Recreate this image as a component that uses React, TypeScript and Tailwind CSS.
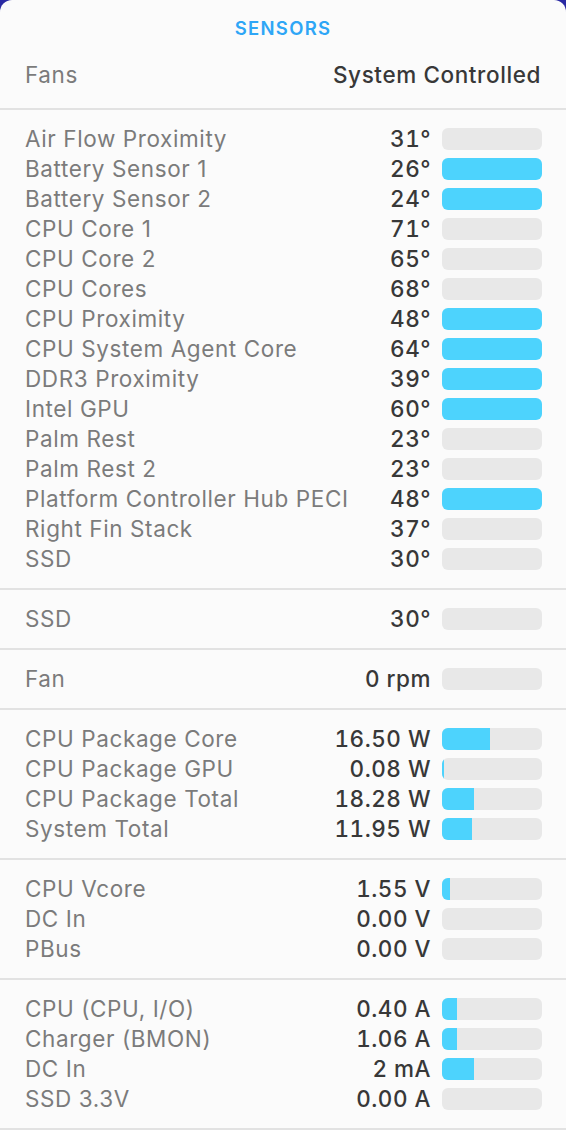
import React from "react";

type Row = {
  label: string;
  value: string;
  fill: number; // px width of the blue part, out of 100
};

const sections: Row[][] = [
  [
    { label: "Air Flow Proximity", value: "31°", fill: 0 },
    { label: "Battery Sensor 1", value: "26°", fill: 100 },
    { label: "Battery Sensor 2", value: "24°", fill: 100 },
    { label: "CPU Core 1", value: "71°", fill: 0 },
    { label: "CPU Core 2", value: "65°", fill: 0 },
    { label: "CPU Cores", value: "68°", fill: 0 },
    { label: "CPU Proximity", value: "48°", fill: 100 },
    { label: "CPU System Agent Core", value: "64°", fill: 100 },
    { label: "DDR3 Proximity", value: "39°", fill: 100 },
    { label: "Intel GPU", value: "60°", fill: 100 },
    { label: "Palm Rest", value: "23°", fill: 0 },
    { label: "Palm Rest 2", value: "23°", fill: 0 },
    { label: "Platform Controller Hub PECI", value: "48°", fill: 100 },
    { label: "Right Fin Stack", value: "37°", fill: 0 },
    { label: "SSD", value: "30°", fill: 0 },
  ],
  [{ label: "SSD", value: "30°", fill: 0 }],
  [{ label: "Fan", value: "0 rpm", fill: 0 }],
  [
    { label: "CPU Package Core", value: "16.50 W", fill: 48 },
    { label: "CPU Package GPU", value: "0.08 W", fill: 2 },
    { label: "CPU Package Total", value: "18.28 W", fill: 32 },
    { label: "System Total", value: "11.95 W", fill: 30 },
  ],
  [
    { label: "CPU Vcore", value: "1.55 V", fill: 8 },
    { label: "DC In", value: "0.00 V", fill: 0 },
    { label: "PBus", value: "0.00 V", fill: 0 },
  ],
  [
    { label: "CPU (CPU, I/O)", value: "0.40 A", fill: 15 },
    { label: "Charger (BMON)", value: "1.06 A", fill: 15 },
    { label: "DC In", value: "2 mA", fill: 32 },
    { label: "SSD 3.3V", value: "0.00 A", fill: 0 },
  ],
];

function Bar({ fill }: { fill: number }) {
  return (
    <div className="w-[100px] h-[22px] shrink-0 rounded-[6px] bg-[#e8e8e8] overflow-hidden flex">
      {fill > 0 && <div className="h-full bg-[#4dd3fd]" style={{ width: `${fill}px` }} />}
    </div>
  );
}

function SensorRow({ row }: { row: Row }) {
  return (
    <div className="flex items-center h-[30px] leading-[30px]">
      <span className="flex-1 whitespace-nowrap text-[#7b7b7b]">{row.label}</span>
      <span className="text-[#383838] font-medium tabular-nums tracking-[0.5px] mr-[11px] whitespace-nowrap">
        {row.value}
      </span>
      <Bar fill={row.fill} />
    </div>
  );
}

export default function App() {
  return (
    <div className="bg-[#2a2aa3] w-[566px] h-[1130px] overflow-hidden">
      <div
        className="bg-[#fbfbfb] rounded-t-[12px] h-full text-[22.5px] tracking-[0.6px]"
        style={{ fontFamily: "Inter, 'Noto Sans', sans-serif" }}
      >
        <div className="h-[54px] pt-[4px] flex items-center justify-center">
          <span className="text-[#2ea6f6] text-[18.5px] font-semibold tracking-[1.3px]">SENSORS</span>
        </div>
        <div className="flex items-center justify-between pl-[25px] pr-[25px] h-[42px] leading-[30px]">
          <span className="text-[#7b7b7b]">Fans</span>
          <span className="text-[#383838] font-medium">System Controlled</span>
        </div>
        <div className="h-[12px]" />
        {sections.map((rows, i) => (
          <div key={i} className="border-t-2 border-[#e2e2e2] py-[14px] pl-[25px] pr-[24px]">
            {rows.map((r, j) => (
              <SensorRow key={j} row={r} />
            ))}
          </div>
        ))}
        <div className="border-t-2 border-[#e2e2e2]" />
      </div>
    </div>
  );
}
